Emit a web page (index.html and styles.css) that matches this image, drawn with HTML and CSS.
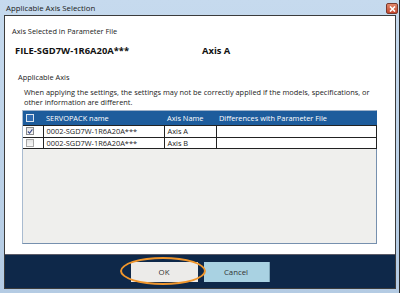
FILE: index.html
```html
<!DOCTYPE html>
<html lang="en">
<head>
    <meta charset="UTF-8">
    <meta name="viewport" content="width=device-width, initial-scale=1.0">
    <title>Applicable Axis Selection</title>
    <link rel="stylesheet" href="styles.css">
</head>
<body>

<div class="window">
    <!-- Title bar -->
    <div class="titlebar">
        <span class="title">Applicable Axis Selection</span>
        <span class="close">
            <svg width="7" height="6" viewBox="0 0 7 6"><path d="M1 0.5 L6 5.5 M6 0.5 L1 5.5" stroke="#fff" stroke-width="1.6"/></svg>
        </span>
    </div>

    <div class="client">
        <div class="content">
            <p class="label">Axis Selected in Parameter File</p>
            <div class="selected">
                <span class="file">FILE-SGD7W-1R6A20A***</span>
                <span class="axis">Axis A</span>
            </div>

            <p class="section">Applicable Axis</p>
            <p class="note">When applying the settings, the settings may not be correctly applied if the models, specifications, or other information are different.</p>

            <!-- Axis list -->
            <div class="grid">
                <table>
                    <tr class="head">
                        <th class="col-check"><span class="box box-head"></span></th>
                        <th class="col-name">SERVOPACK name</th>
                        <th class="col-axis">Axis Name</th>
                        <th class="col-diff">Differences with Parameter File</th>
                    </tr>
                    <tr>
                        <td class="col-check"><span class="box checked"><svg width="7" height="7" viewBox="0 0 7 7"><path d="M1 3.5 L3 5.5 L6.3 1" fill="none" stroke="#3a4a8a" stroke-width="1.3"/></svg></span></td>
                        <td>0002-SGD7W-1R6A20A***</td>
                        <td>Axis A</td>
                        <td></td>
                    </tr>
                    <tr>
                        <td class="col-check"><span class="box"></span></td>
                        <td>0002-SGD7W-1R6A20A***</td>
                        <td>Axis B</td>
                        <td></td>
                    </tr>
                </table>
            </div>
        </div>

        <div class="footer">
            <button class="btn ok">OK</button>
            <button class="btn cancel">Cancel</button>
            <span class="ring"></span>
        </div>
    </div>
</div>

</body>
</html>
```

FILE: styles.css
```css
* {
    box-sizing: border-box;
}

body {
    margin: 0;
    width: 400px;
    height: 293px;
    overflow: hidden;
    font-family: "Open Sans", "DejaVu Sans", sans-serif;
    font-size: 7.4px;
    color: #222;
}

.window {
    display: flex;
    flex-direction: column;
    height: 293px;
    padding: 0 3px 4px 4px;
    background: linear-gradient(#c6daee, #b4cbe3);
    border-right: 1px solid #2b2b2b;
}

.titlebar {
    display: flex;
    align-items: center;
    justify-content: space-between;
    height: 15px;
    padding: 0 0 0 2px;
}

.title {
    font-size: 7.8px;
    color: #1a1a1a;
}

.close {
    display: flex;
    align-items: center;
    justify-content: center;
    width: 12px;
    height: 11px;
    margin-top: 2px;
    margin-right: -2px;
    background: linear-gradient(#e0876b, #c4462c);
    border: 1px solid #7a3a2e;
    border-radius: 2px;
}

.client {
    flex: 1;
    display: flex;
    flex-direction: column;
    background: #fff;
    border: 1px solid #3c3c3c;
}

.content {
    flex: 1;
    padding: 10px 0 0 0;
}

p {
    margin: 0;
}

.label {
    line-height: 10px;
    padding-left: 7px;
}

.selected {
    display: flex;
    margin-top: 9px;
    padding-left: 10px;
    line-height: 12px;
    font-size: 9.4px;
    font-weight: bold;
    color: #111;
}

.file {
    width: 187px;
}

.section {
    margin-top: 15px;
    padding-left: 13px;
    line-height: 10px;
}

.note {
    margin-top: 5px;
    padding-left: 19px;
    padding-right: 16px;
    line-height: 10px;
}

.grid {
    margin: 3px 0 0 17px;
    width: 355px;
    height: 134px;
    background: #efefed;
    border: 1px solid #7690ae;
    border-left-color: #a9bbd0;
    border-top-color: #9fb3ca;
}

table {
    border-collapse: collapse;
    width: 354px;
    table-layout: fixed;
}

th {
    height: 14px;
    background: #1d5c9c;
    color: #fff;
    font-weight: normal;
    text-align: left;
    padding: 0 3px;
}

td {
    height: 12px;
    background: #fff;
    border: 1px solid #222;
    padding: 0 3px;
    white-space: nowrap;
}

tr:last-child td {
    height: 11px;
}

.col-check {
    width: 20px;
    padding: 0 0 0 3px;
    border-left: none;
}

.col-name {
    width: 121px;
}

.col-axis {
    width: 52px;
}

.box {
    display: flex;
    align-items: center;
    justify-content: center;
    width: 8px;
    height: 8px;
    border: 1px solid #a8a8a8;
    background: linear-gradient(#e4e4e4, #f8f8f8);
}

.box-head {
    border-color: #dde6f0;
    background: #2f6bb0;
}

.checked {
    border-color: #8a8a8a;
}

.footer {
    position: relative;
    display: flex;
    align-items: center;
    justify-content: center;
    gap: 6px;
    height: 34px;
    background: #0e2849;
    border-top: 1px solid #5c5c68;
}

.btn {
    height: 20px;
    border: none;
    font-family: "Open Sans", "DejaVu Sans", sans-serif;
    font-size: 7.8px;
    color: #333;
    padding: 0;
}

.ok {
    width: 67px;
    background: #ecebe9;
}

.cancel {
    width: 66px;
    background: #a9d2e2;
    border-right: 1px solid #7fa6b8;
}

/* orange highlight round the OK button */
.ring {
    position: absolute;
    left: 115px;
    top: 2px;
    width: 86px;
    height: 28px;
    border: 2px solid #f0962c;
    border-radius: 50%;
}
```
